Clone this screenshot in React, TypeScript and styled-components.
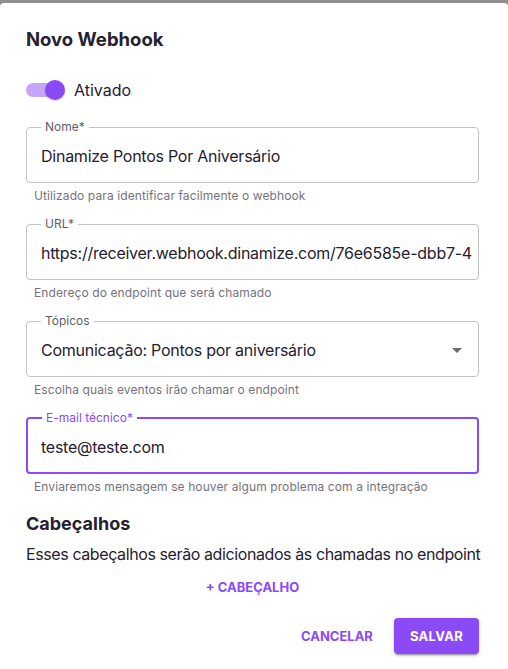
import React from "react";
import styled, { createGlobalStyle } from "styled-components";

const purple = "#8a4af6";
const ink = "#25212f";

const GlobalStyle = createGlobalStyle`
  html, body {
    margin: 0;
    padding: 0;
    background: #8f8f8f;
  }
  body {
    font-family: Inter, "Noto Sans", sans-serif;
    color: ${ink};
  }
`;

const Backdrop = styled.div`
  padding-top: 3px;
  width: 508px;
  height: 669px;
  box-sizing: border-box;
`;

const Dialog = styled.div`
  background: #fff;
  border-radius: 4px 4px 0 0;
  height: 666px;
  box-sizing: border-box;
  padding: 24px 29px 0 26px;
  display: flex;
  flex-direction: column;
`;

const Title = styled.h2`
  margin: 0;
  font-size: 18.5px;
  line-height: 24px;
  font-weight: 700;
`;

const ToggleRow = styled.label`
  display: flex;
  align-items: center;
  gap: 9px;
  height: 24px;
  margin-top: 27px;
  font-size: 16px;
`;

const Track = styled.span<{ $on: boolean }>`
  width: 34px;
  height: 14px;
  border-radius: 7px;
  background: ${(p) => (p.$on ? "#c5a6fb" : "#bdbdbd")};
  display: flex;
  align-items: center;
  justify-content: ${(p) => (p.$on ? "flex-end" : "flex-start")};
  margin-right: 5px;
`;

const Thumb = styled.span`
  width: 20px;
  height: 20px;
  border-radius: 50%;
  background: ${purple};
  margin-right: -5px;
  box-shadow: 0 1px 2px rgba(0, 0, 0, 0.2);
`;

const Fields = styled.div`
  display: flex;
  flex-direction: column;
  gap: 12px;
  margin-top: 19px;
`;

const FieldBlock = styled.div`
  display: flex;
  flex-direction: column;
`;

const Box = styled.fieldset<{ $focused?: boolean }>`
  margin: 0;
  min-width: 0;
  border: ${(p) => (p.$focused ? `2px solid ${purple}` : "1px solid #c4c4c4")};
  border-radius: 4px;
  padding: ${(p) => (p.$focused ? "0 1px 2px 13px" : "0 1px 3px 14px")};
`;

const Legend = styled.legend<{ $focused?: boolean }>`
  font-size: 12px;
  line-height: 12px;
  padding: 0 4px;
  margin-left: ${(p) => (p.$focused ? "1px" : "0")};
  color: ${(p) => (p.$focused ? purple : "#5f5d66")};
`;

const Value = styled.div`
  height: 46px;
  display: flex;
  align-items: center;
  justify-content: space-between;
  font-size: 16px;
  letter-spacing: -0.25px;
  color: ${ink};
  white-space: nowrap;
  overflow: hidden;
`;

const Helper = styled.div`
  margin: 3px 8px 0;
  font-size: 12px;
  line-height: 20px;
  letter-spacing: 0.1px;
  color: #75727d;
`;

const SectionTitle = styled.h3`
  margin: 14px 0 0;
  font-size: 18px;
  line-height: 26px;
  font-weight: 700;
`;

const SectionText = styled.p`
  margin: 5px 0 0;
  font-size: 16px;
  line-height: 24px;
  letter-spacing: -0.4px;
  white-space: nowrap;
`;

const TextButton = styled.button`
  border: none;
  background: none;
  color: ${purple};
  font-family: inherit;
  font-weight: 700;
  font-size: 13px;
  padding: 0 8px;
  height: 30px;
  cursor: pointer;
`;

const AddRow = styled.div`
  display: flex;
  justify-content: center;
  margin-top: 6px;
`;

const Footer = styled.div`
  display: flex;
  justify-content: flex-end;
  align-items: center;
  gap: 13px;
  margin-top: 16px;
`;

const PrimaryButton = styled.button`
  border: none;
  border-radius: 4px;
  background: ${purple};
  color: #fff;
  font-family: inherit;
  font-weight: 700;
  font-size: 13px;
  letter-spacing: 0.3px;
  height: 36px;
  padding: 0 16px;
  box-shadow: 0 3px 1px -2px rgba(0, 0, 0, 0.2), 0 2px 2px 0 rgba(0, 0, 0, 0.14),
    0 1px 5px 0 rgba(0, 0, 0, 0.12);
`;

const Arrow = () => (
  <svg width="24" height="24" viewBox="0 0 24 24" style={{ marginRight: 8, flexShrink: 0 }}>
    <path d="M7 10l5 5 5-5z" fill="#6b6b6b" />
  </svg>
);

type FieldProps = {
  label: string;
  value: string;
  helper: string;
  focused?: boolean;
  select?: boolean;
};

const Field = ({ label, value, helper, focused, select }: FieldProps) => (
  <FieldBlock>
    <Box $focused={focused}>
      <Legend $focused={focused}>{label}</Legend>
      <Value>
        <span>{value}</span>
        {select && <Arrow />}
      </Value>
    </Box>
    <Helper>{helper}</Helper>
  </FieldBlock>
);

export default function App() {
  return (
    <>
      <GlobalStyle />
      <Backdrop>
        <Dialog>
          <Title>Novo Webhook</Title>
          <ToggleRow>
            <Track $on>
              <Thumb />
            </Track>
            Ativado
          </ToggleRow>
          <Fields>
            <Field
              label="Nome*"
              value="Dinamize Pontos Por Aniversário"
              helper="Utilizado para identificar facilmente o webhook"
            />
            <Field
              label="URL*"
              value="https://receiver.webhook.dinamize.com/76e6585e-dbb7-4"
              helper="Endereço do endpoint que será chamado"
            />
            <Field
              label="Tópicos"
              value="Comunicação: Pontos por aniversário"
              helper="Escolha quais eventos irão chamar o endpoint"
              select
            />
            <Field
              label="E-mail técnico*"
              value="teste@teste.com"
              helper="Enviaremos mensagem se houver algum problema com a integração"
              focused
            />
          </Fields>
          <SectionTitle>Cabeçalhos</SectionTitle>
          <SectionText>Esses cabeçalhos serão adicionados às chamadas no endpoint</SectionText>
          <AddRow>
            <TextButton>+ CABEÇALHO</TextButton>
          </AddRow>
          <Footer>
            <TextButton>CANCELAR</TextButton>
            <PrimaryButton>SALVAR</PrimaryButton>
          </Footer>
        </Dialog>
      </Backdrop>
    </>
  );
}
